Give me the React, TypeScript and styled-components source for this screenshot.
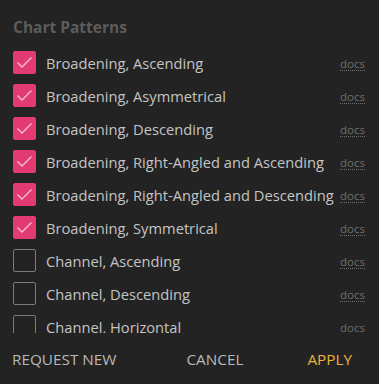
import styled, { createGlobalStyle } from 'styled-components';

const GlobalStyle = createGlobalStyle`
  html, body {
    margin: 0;
    padding: 0;
    background: #232323;
  }
  * {
    box-sizing: border-box;
  }
`;

const StyledPanel = styled.div`
  width: 379px;
  height: 384px;
  background-color: #232323;
  display: flex;
  flex-direction: column;
  font-family: 'Open Sans', 'Noto Sans', sans-serif;
  overflow: hidden;
`;

const StyledHeading = styled.h2`
  margin: 0;
  padding: 16px 13px 0;
  height: 46px;
  font-size: 15.5px;
  font-weight: 700;
  color: #5c5c5c;
  line-height: 22px;
`;

const StyledList = styled.ul`
  list-style: none;
  margin: 0;
  padding: 0;
  height: 287px;
  overflow: hidden;
`;

const StyledRow = styled.li`
  display: flex;
  flex-direction: row;
  align-items: center;
  height: 33px;
  padding: 0 14px 0 13px;
`;

const StyledBox = styled.span<{ $checked: boolean }>`
  flex: none;
  width: 23px;
  height: 23px;
  border-radius: 2px;
  border: 1px solid ${(props) => (props.$checked ? '#e23a72' : '#7c7c7c')};
  background-color: ${(props) => (props.$checked ? '#e23a72' : 'transparent')};
  display: flex;
  align-items: center;
  justify-content: center;
`;

const StyledLabel = styled.span`
  flex: 1;
  margin-left: 10px;
  font-size: 14.7px;
  color: #c4c4c4;
  white-space: nowrap;
`;

const StyledDocs = styled.a`
  font-size: 11.5px;
  color: #6e6e6e;
  text-decoration: none;
  border-bottom: 1px dotted #6e6e6e;
  line-height: 13px;
  margin-top: 3px;
`;

const StyledFooter = styled.div`
  display: flex;
  flex-direction: row;
  align-items: center;
  gap: 64px;
  height: 51px;
  padding: 0 27px 0 12px;
`;

const StyledButton = styled.button<{ $accent?: boolean; $grow?: boolean }>`
  flex: ${(props) => (props.$grow ? 1 : 'none')};
  text-align: left;
  background: none;
  border: none;
  padding: 0;
  font-family: inherit;
  font-size: 15.3px;
  text-transform: uppercase;
  color: ${(props) => (props.$accent ? '#e8b33c' : '#b8b8b8')};
  cursor: pointer;
`;

const patterns = [
  { name: 'Broadening, Ascending', checked: true },
  { name: 'Broadening, Asymmetrical', checked: true },
  { name: 'Broadening, Descending', checked: true },
  { name: 'Broadening, Right-Angled and Ascending', checked: true },
  { name: 'Broadening, Right-Angled and Descending', checked: true },
  { name: 'Broadening, Symmetrical', checked: true },
  { name: 'Channel, Ascending', checked: false },
  { name: 'Channel, Descending', checked: false },
  { name: 'Channel, Horizontal', checked: false },
];

function Check() {
  return (
    <svg width="17" height="13" viewBox="0 0 17 13" fill="none">
      <path d="M1.5 6.5 L6 11 L15.5 1.5" stroke="#f6c0d3" strokeWidth="1.3" />
    </svg>
  );
}

export default function App() {
  return (
    <>
      <GlobalStyle />
      <StyledPanel>
        <StyledHeading>Chart Patterns</StyledHeading>
        <StyledList>
          {patterns.map((p) => (
            <StyledRow key={p.name}>
              <StyledBox $checked={p.checked}>{p.checked && <Check />}</StyledBox>
              <StyledLabel>{p.name}</StyledLabel>
              <StyledDocs href="#">docs</StyledDocs>
            </StyledRow>
          ))}
        </StyledList>
        <StyledFooter>
          <StyledButton $grow>Request New</StyledButton>
          <StyledButton>Cancel</StyledButton>
          <StyledButton $accent>Apply</StyledButton>
        </StyledFooter>
      </StyledPanel>
    </>
  );
}
